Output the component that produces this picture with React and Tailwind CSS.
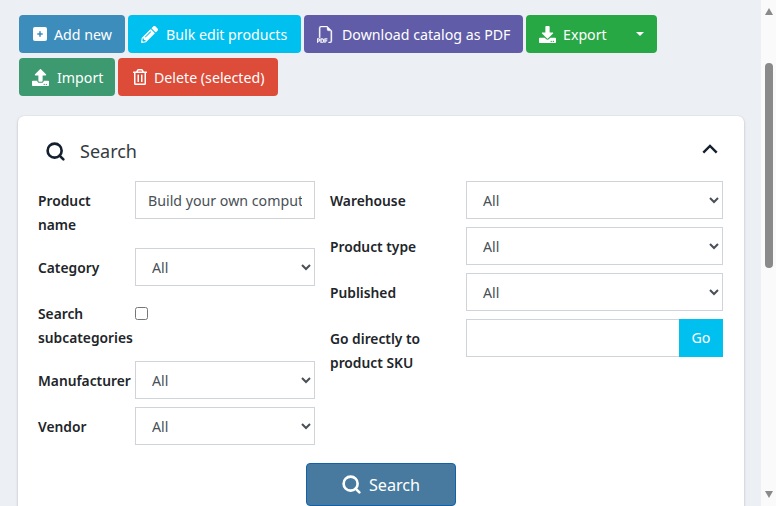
import { FaPencilAlt, FaDownload, FaUpload, FaRegTrashAlt } from 'react-icons/fa'
import { BsFiletypePdf } from 'react-icons/bs'
import { Search } from 'lucide-react'

function ActionButton({ icon, label, className, slot, children }) {
  return (
    <button className={`relative flex h-[38px] items-center rounded-[4px] pl-[13px] text-[14.2px] text-white ${className}`}>
      <span className={`flex shrink-0 items-center ${slot}`}>{icon}</span>
      <span className="pt-px">{label}</span>
      {children}
    </button>
  )
}

function Label({ children }) {
  return (
    <label className="block pb-[3px] pt-2 text-[13.8px] font-semibold leading-6 text-[#212529]">
      {children}
    </label>
  )
}

function SelectField({ className = '' }) {
  return (
    <select className={`h-[38px] border border-[#ced4da] bg-white px-3 text-[14.2px] text-[#495057] ${className}`}>
      <option>All</option>
    </select>
  )
}

function Row({ label, labelWidth, children }) {
  return (
    <div className="mb-2 flex items-start">
      <div className={`shrink-0 ${labelWidth}`}>
        <Label>{label}</Label>
      </div>
      {children}
    </div>
  )
}

export default function App() {
  return (
    <div className="flex h-[506px] overflow-hidden bg-[#ecf0f5] font-['Noto_Sans',sans-serif]">
      <main className="w-[761px] shrink-0 pl-[18px] pr-[17px] pt-[15px]">
        {/* Botones de acción */}
        <div className="flex flex-wrap gap-x-[3px] gap-y-[5px] pl-px">
          <ActionButton
            className="w-[106px] bg-[#3c8dbc]"
            slot="w-[22px] pl-px"
            icon={
              <svg width="14" height="14" viewBox="0 0 14 14">
                <rect width="14" height="14" rx="2" fill="#fff" />
                <path d="M7 4.3v5.4M4.3 7h5.4" stroke="#3c8dbc" strokeWidth="1.5" />
              </svg>
            }
            label="Add new"
          />
          <ActionButton className="w-[173px] bg-[#00c0ef]" slot="w-[25px]" icon={<FaPencilAlt size={17} />} label="Bulk edit products" />
          <ActionButton
            className="w-[219px] bg-[#605ca8]"
            slot="w-[25px]"
            icon={<BsFiletypePdf size={17} stroke="currentColor" strokeWidth={0.35} />}
            label="Download catalog as PDF"
          />
          <ActionButton className="w-[131px] bg-[#28a745]" slot="w-[24px]" icon={<FaDownload size={17} />} label="Export">
            <span className="absolute right-[13px] top-[17px] h-0 w-0 border-x-4 border-t-4 border-x-transparent border-t-white" />
          </ActionButton>
          <ActionButton className="w-[96px] bg-[#3d9970]" slot="w-[25px]" icon={<FaUpload size={17} />} label="Import" />
          <ActionButton className="w-[160px] bg-[#dd4b39]" slot="w-[23px] pl-px" icon={<FaRegTrashAlt size={16} />} label="Delete (selected)" />
        </div>

        {/* Tarjeta de búsqueda */}
        <section className="mt-5 rounded-md bg-white pb-10 pl-5 pr-[21px] shadow-[0_0_1px_rgba(0,0,0,0.125),0_1px_3px_rgba(0,0,0,0.2)]">
          <div className="flex h-[65px] items-center pl-[7px] pr-[5px] pt-[5px]">
            <Search size={21} strokeWidth={3} className="text-[#14202e]" />
            <span className="ml-[14px] text-[18px] text-[#343a40]">Search</span>
            <svg width="16" height="10" viewBox="0 0 16 10" className="mb-1 ml-auto text-[#14202e]">
              <path d="M1.3 8.7 8 2l6.7 6.7" fill="none" stroke="currentColor" strokeWidth="2.4" />
            </svg>
          </div>

          <div className="flex gap-[15px]">
            <div className="w-[277px]">
              <Row label={<>Product<br />name</>} labelWidth="w-[97px]">
                <input
                  readOnly
                  defaultValue="Build your own computer"
                  className="h-[38px] w-[180px] border border-[#ced4da] px-3 text-[14.2px] text-[#495057]"
                />
              </Row>
              <Row label="Category" labelWidth="w-[97px]">
                <SelectField className="w-[180px]" />
              </Row>
              <Row label={<>Search<br />subcategories</>} labelWidth="w-[97px]">
                <input type="checkbox" className="mt-[13px] h-[13px] w-[13px]" />
              </Row>
              <Row label="Manufacturer" labelWidth="w-[97px]">
                <SelectField className="w-[180px]" />
              </Row>
              <Row label="Vendor" labelWidth="w-[97px]">
                <SelectField className="w-[180px]" />
              </Row>
            </div>

            <div className="w-[393px]">
              <Row label="Warehouse" labelWidth="w-[136px]">
                <SelectField className="w-[257px]" />
              </Row>
              <Row label="Product type" labelWidth="w-[136px]">
                <SelectField className="w-[257px]" />
              </Row>
              <Row label="Published" labelWidth="w-[136px]">
                <SelectField className="w-[257px]" />
              </Row>
              <Row label={<>Go directly to<br />product SKU</>} labelWidth="w-[136px]">
                <div className="flex w-[257px]">
                  <input className="h-[38px] min-w-0 flex-1 border border-r-0 border-[#ced4da]" />
                  <button className="h-[38px] w-11 bg-[#00c0ef] text-[14.2px] text-white">Go</button>
                </div>
              </Row>
            </div>
          </div>

          <div className="mt-[10px] flex justify-center">
            <button className="flex h-[43px] w-[150px] items-center justify-center gap-[7px] rounded-[4px] border border-[#1162ac] bg-[#477a9e] text-[16.2px] text-white">
              <Search size={21} strokeWidth={3} />
              <span className="pt-px">Search</span>
            </button>
          </div>
        </section>
      </main>

      {/* Barra de scroll */}
      <div className="flex w-[15px] shrink-0 flex-col items-center bg-[#fafafa] pb-[8px] pt-[8px]">
        <span className="h-0 w-0 border-x-[4.5px] border-b-[7px] border-x-transparent border-b-[#8a8a8a]" />
        <span className="mt-[48px] h-[205px] w-2 rounded-full bg-[#8a8a8a]" />
        <span className="mt-auto h-0 w-0 border-x-[4.5px] border-t-[7px] border-x-transparent border-t-[#8a8a8a]" />
      </div>
    </div>
  )
}
